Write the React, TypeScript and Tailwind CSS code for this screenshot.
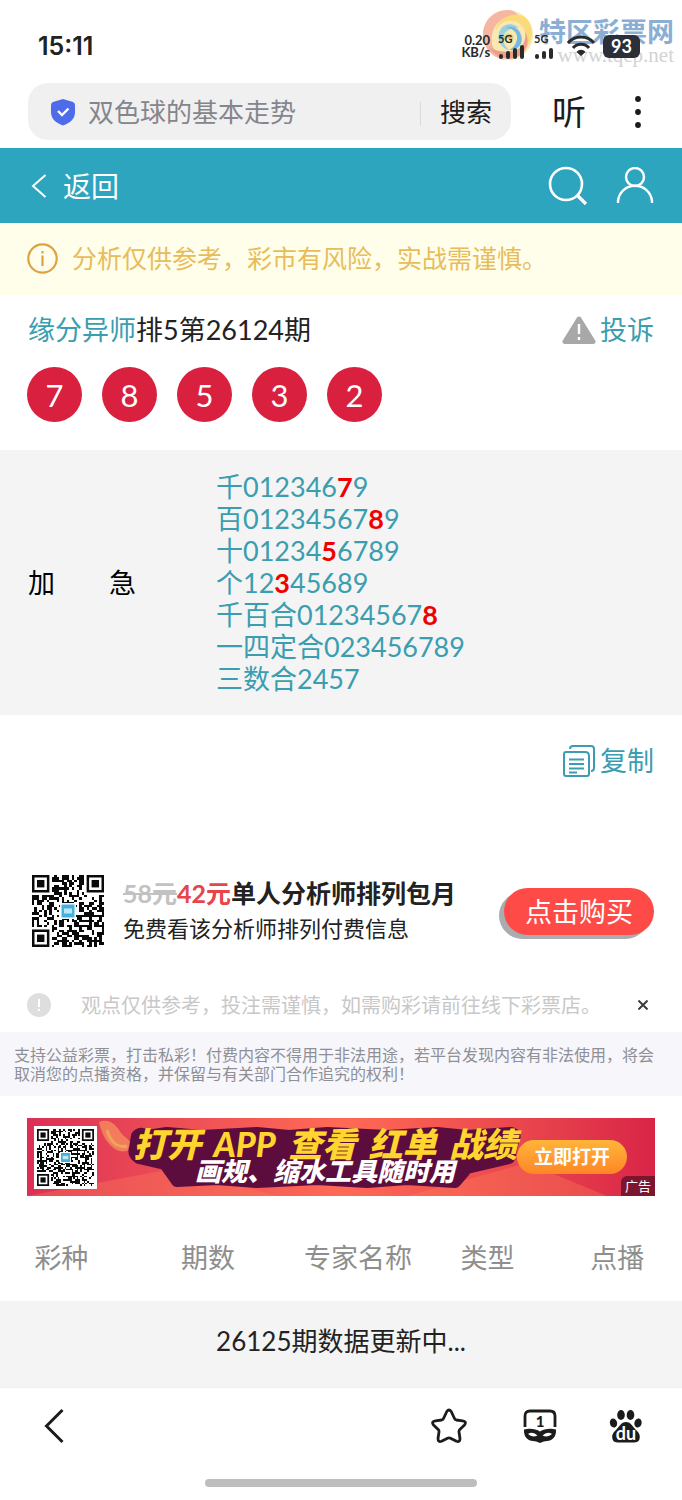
const BALLS = [7, 8, 5, 3, 2];

// [prefix, hit digit, suffix]
const PICKS = [
  ["千012346", "7", "9"],
  ["百01234567", "8", "9"],
  ["十01234", "5", "6789"],
  ["个12", "3", "45689"],
  ["千百合01234567", "8", ""],
  ["一四定合023456789", "", ""],
  ["三数合2457", "", ""],
];

function inFinder(x: number, y: number, n: number) {
  return (x < 8 && y < 8) || (x >= n - 8 && y < 8) || (x < 8 && y >= n - 8);
}

function isDark(x: number, y: number, n: number) {
  let h = Math.imul(x + 1, 374761393) ^ Math.imul(y + n, 668265263);
  h = Math.imul(h ^ (h >>> 13), 1274126177);
  h = Math.imul(h ^ (h >>> 15), 2246822519);
  return ((h ^ (h >>> 16)) >>> 0) % 100 < 52;
}

function qrPath(n: number) {
  let d = "";
  for (let y = 0; y < n; y++) {
    for (let x = 0; x < n; x++) {
      if (!inFinder(x, y, n) && isDark(x, y, n)) d += `M${x} ${y}h1v1h-1z`;
    }
  }
  return d;
}

function QrCode({ size, className }: { size: number; className: string }) {
  const corners = [
    [0, 0],
    [size - 7, 0],
    [0, size - 7],
  ];
  const mid = size / 2;
  return (
    <svg
      viewBox={`0 0 ${size} ${size}`}
      className={className}
      role="img"
      aria-label="二维码"
    >
      <path d={qrPath(size)} fill="#0a0a0a" shapeRendering="crispEdges" />
      {corners.map(([x, y]) => (
        <g key={`${x}-${y}`}>
          <path
            d={`M${x + 0.5} ${y + 0.5}h6v6h-6z`}
            fill="#fff"
            stroke="#0a0a0a"
          />
          <path d={`M${x + 2} ${y + 2}h3v3h-3z`} fill="#0a0a0a" />
        </g>
      ))}
      <rect x={mid - 3.2} y={mid - 3.2} width="6.4" height="6.4" fill="#fff" />
      <rect x={mid - 2.6} y={mid - 2.6} width="5.2" height="5.2" fill="#43b1de" />
      <rect x={mid - 1.6} y={mid - 1} width="3.2" height="2" fill="#bfe6f6" />
    </svg>
  );
}

function Signal({ bars, className }: { bars: number[]; className: string }) {
  return (
    <div className="flex flex-col items-start">
      <span className="text-[11px] leading-[12px] font-bold">5G</span>
      <svg viewBox={`0 0 ${bars.length * 7} 15`} className={className} fill="none">
        {bars.map((h, i) => (
          <path
            key={i}
            d={`M${3 + i * 7} 12V${12 - h}`}
            stroke="#2a2a2a"
            strokeWidth="4"
            strokeLinecap="round"
          />
        ))}
      </svg>
    </div>
  );
}

function Watermark() {
  return (
    <div className="absolute top-2 right-2 flex items-start opacity-80">
      <svg viewBox="0 0 54 54" className="h-[54px] w-[54px]">
        <circle cx="27" cy="27" r="25" fill="#fae3a0" />
        <path d="M27 2C12 2 2 13 2 27C2 40 12 50 24 52C14 46 9 37 11 27C13 14 24 7 38 9C36 5 32 2 27 2Z" fill="#f3a58c" />
        <path d="M44 9C32 3 16 10 14 24C18 14 28 10 36 14C46 19 48 32 42 43C52 34 55 19 44 9Z" fill="#fbd25a" />
        <path d="M8 38C12 48 26 55 38 48C47 43 49 32 44 23C46 34 40 42 31 43C21 45 12 42 8 38Z" fill="#e98872" />
        <path d="M38 20C31 13 20 16 18 25C16 33 20 40 28 42C22 36 20 30 24 25C28 20 34 19 38 20Z" fill="#79c7dc" />
        <path d="M28 42C37 43 43 35 40 27C38 20 31 17 25 20C32 20 37 25 36 31C35 37 32 40 28 42Z" fill="#4fa8dd" />
        <path d="M22 35C20 28 25 24 30 26C34 28 33 34 29 34C31 30 27 28 25 30C23 32 23 34 22 35Z" fill="#b6d97f" />
        <circle cx="29" cy="29" r="2.5" fill="#f29a4b" />
      </svg>
      <div className="mt-2 ml-1 flex flex-col items-end">
        <span className="font-['Noto_Sans_CJK_SC',sans-serif] text-[27px] leading-[30px] font-bold text-[#6f9bcb]">
          特区彩票网
        </span>
        <span className="font-['Liberation_Serif',serif] text-[21px] leading-[18px] text-[#c9c9c9]">
          www.tqcp.net
        </span>
      </div>
    </div>
  );
}

function StatusBar() {
  return (
    <div className="relative flex items-center justify-between pt-7 pr-[42px] pb-[19px] pl-[38px]">
      <Watermark />
      <span className="font-[Inter,sans-serif] text-[25px] leading-9 font-semibold text-[#222]">
        15:11
      </span>
      <div className="relative flex items-center gap-2 text-[#2a2a2a]">
        <div className="text-right text-[13px] leading-[12px] font-bold">
          <p>0.20</p>
          <p>KB/s</p>
        </div>
        <Signal bars={[1, 4, 7, 10]} className="h-[15px] w-7" />
        <Signal bars={[1, 4, 7]} className="h-[15px] w-[21px]" />
        <svg viewBox="0 0 28 22" className="ml-1 h-[22px] w-7" fill="none" stroke="#2a2a2a" strokeWidth="3">
          <path d="M1 8C8 0 20 0 27 8" />
          <path d="M6 13C10 8 18 8 22 13" />
          <path d="M9.500 17C12 14 16 14 18.500 17L14 21Z" fill="#2a2a2a" stroke="none" />
        </svg>
        <span className="rounded-md bg-[#2b2f38] px-2 text-[18px] leading-[23px] font-bold text-white">
          93
        </span>
      </div>
    </div>
  );
}

function SearchBar() {
  return (
    <div className="flex items-center pr-[41px] pb-2 pl-7">
      <form className="flex h-[57px] min-w-0 flex-1 items-center rounded-[20px] bg-[#f0f0f1] pr-[19px] pl-[22px]">
        <svg viewBox="0 0 26 28" className="h-7 w-[26px] shrink-0">
          <path
            d="M13 1L23 4Q25 5 25 7V14C25 21 20 25 13 27.500C6 25 1 21 1 14V7Q1 5 3 4Z"
            fill="#4d6bea"
          />
          <path d="M8 13L12 17L18.500 10.500" fill="none" stroke="#fff" strokeWidth="2.400" />
        </svg>
        <input
          type="text"
          aria-label="搜索词"
          placeholder="双色球的基本走势"
          className="ml-3 min-w-0 flex-1 bg-transparent text-[26px] leading-9 outline-none placeholder:text-[#85858c]"
        />
        <button
          type="button"
          className="relative pl-5 text-[26px] leading-9 text-[#1c1c1c] before:absolute before:top-2 before:left-0 before:h-6 before:w-px before:bg-[#dadada]"
        >
          搜索
        </button>
      </form>
      <button type="button" className="ml-[41px] text-[34px] leading-9 text-[#1c1c1c]">
        听
      </button>
      <button type="button" aria-label="更多" className="ml-[49px]">
        <svg viewBox="0 0 6 34" className="h-[34px] w-[6px]" fill="#1c1c1c">
          <circle cx="3" cy="4" r="2.900" />
          <circle cx="3" cy="17" r="2.900" />
          <circle cx="3" cy="30" r="2.900" />
        </svg>
      </button>
    </div>
  );
}

function Header() {
  return (
    <header className="flex h-[75px] items-center bg-[#2ea5be] pr-7 pl-[31px] text-white">
      <a href="#" className="flex items-center gap-4 text-[28px] leading-9">
        <svg viewBox="0 0 16 26" className="h-[26px] w-4" fill="none" stroke="currentColor" strokeWidth="2">
          <path d="M14.500 2L2 13L14.500 24" />
        </svg>
        返回
      </a>
      <button type="button" aria-label="搜索" className="ml-auto">
        <svg viewBox="0 0 40 40" className="h-10 w-10" fill="none" stroke="currentColor" strokeWidth="2.600">
          <circle cx="18" cy="18" r="16" />
          <path d="M29 29L38 38" strokeWidth="3.200" />
        </svg>
      </button>
      <button type="button" aria-label="我的" className="ml-7">
        <svg viewBox="0 0 38 38" className="h-[38px] w-[38px]" fill="none" stroke="currentColor" strokeWidth="2.400">
          <circle cx="19" cy="10" r="9" />
          <path d="M2 36V34C3 25 10 18.800 19 18.800S35 25 36 34V36" />
        </svg>
      </button>
    </header>
  );
}

function Banner() {
  return (
    <a
      href="#"
      className="relative mx-[27px] mt-[22px] flex h-[78px] items-center overflow-hidden bg-linear-to-r from-[#dc2f55] via-[#ff6a55] to-[#d92347] pl-[7px]"
    >
      <svg
        viewBox="0 0 628 78"
        preserveAspectRatio="xMinYMid slice"
        className="absolute inset-0 h-full w-full"
      >
        <path d="M0 78L150 50L250 78ZM380 78L500 45L580 78Z" fill="#ff7d5a" opacity="0.35" />
        <path d="M72 4C82 0 88 6 92 12C98 22 108 22 102 32C90 38 76 24 72 4Z" fill="#f58b5c" opacity="0.8" />
        <path d="M80 12C84 26 92 30 100 28" fill="none" stroke="#f0a35c" strokeWidth="3" />
        <path
          d="M110 18Q114 14 120 18L140 15L175 18L230 15L262 18L300 15L360 18L410 15L440 18L484 15Q490 16 486 24L482 40L440 50L428 64L380 61L340 64L290 61L230 64L190 61L150 63L138 46L112 40Q106 36 108 30Z"
          fill="#5c0d3d"
          stroke="#5c0d3d"
          strokeWidth="12"
          strokeLinejoin="round"
        />
      </svg>
      <div className="relative bg-white p-[3px]">
        <QrCode size={33} className="h-[57px] w-[57px]" />
      </div>
      <div className="relative ml-9 flex w-[384px] flex-col items-center font-black italic">
        <p className="flex w-full justify-between text-[34px] leading-[28px] text-[#ffd52e]">
          <span>打开</span>
          <span>APP</span>
          <span>查看</span>
          <span>红单</span>
          <span>战绩</span>
        </p>
        <p className="text-[26px] leading-[26px] text-white">画规、缩水工具随时用</p>
      </div>
      <span className="relative rounded-full bg-linear-to-b from-[#ffb53a] to-[#ff8526] px-[17px] text-[19px] leading-[34px] font-bold text-white">
        立即打开
      </span>
      <span className="absolute right-0 bottom-0 rounded-tl-md bg-[#7c1630] px-1 text-[13px] leading-5 text-white">
        广告
      </span>
    </a>
  );
}

function BottomNav() {
  return (
    <nav className="border-t border-[#f0f0f0] pt-5 pb-[13px]">
      <div className="flex items-center pr-[38px] pl-11">
        <a href="#" aria-label="返回">
          <svg viewBox="0 0 24 36" className="h-9 w-6" fill="none" stroke="#1c1c1c" strokeWidth="3">
            <path d="M18.500 2L2.500 18L18.500 34" />
          </svg>
        </a>
        <button type="button" aria-label="收藏" className="ml-auto">
          <svg viewBox="0 0 36 36" className="h-9 w-9" fill="none" stroke="#1c1c1c" strokeWidth="2.800">
            <path
              d="M15.800 3.500Q18 .5 20.200 3.500L23.500 10.500Q24 11.700 25.300 12L31.500 12.800Q36 13.500 33.500 17L28.800 21.500Q27.800 22.500 28 24L29 30.500Q29 34.500 25.500 33.300L19.500 30.200Q18 29.400 16.500 30.200L10.500 33.300Q7 34.500 7 30.500L8 24Q8.200 22.500 7.200 21.500L2.500 17Q0 13.500 4.500 12.800L10.700 12Q12 11.700 12.500 10.500Z"
              strokeLinejoin="round"
            />
          </svg>
        </button>
        <button type="button" aria-label="窗口" className="ml-[55px]">
          <svg viewBox="0 0 36 36" className="h-9 w-9" fill="none">
            <path d="M3 19V8Q3 3 8 3H28Q33 3 33 8V19" stroke="#1c1c1c" strokeWidth="2.800" />
            <path
              d="M2 21.500C8 20 14 21 18 23.500C22 21 28 20 34 21.500C34.500 29 30 33 25 33Q22 33 18 35Q14 33 11 33C6 33 1.500 29 2 21.500Z"
              fill="#1c1c1c"
            />
            <path d="M6 26Q11 23 15.500 27.500Q10 30 6 26ZM30 26Q25 23 20.500 27.500Q26 30 30 26Z" fill="#fff" />
            <text x="18" y="19" textAnchor="middle" fontSize="15" fontWeight="900" fill="#1c1c1c">
              1
            </text>
          </svg>
        </button>
        <button type="button" aria-label="百度" className="ml-[50px]">
          <svg viewBox="0 0 36 36" className="h-9 w-9" fill="#1c1c1c">
            <ellipse cx="13" cy="7" rx="3.800" ry="5" />
            <ellipse cx="22.500" cy="7" rx="3.800" ry="5" />
            <ellipse cx="5.500" cy="15" rx="3.600" ry="4.600" transform="rotate(-15 5.500 15)" />
            <ellipse cx="30" cy="15" rx="3.600" ry="4.600" transform="rotate(15 30 15)" />
            <path d="M18 14C23 14 25 19 28 22C31 25 32.500 27 31.500 31C30.500 35 27 34.500 18 34.500S5.500 35 4.500 31C3.500 27 5 25 8 22C11 19 13 14 18 14Z" />
            <text x="18" y="32" textAnchor="middle" fontSize="18" fontWeight="700" fill="#fff">
              du
            </text>
          </svg>
        </button>
      </div>
      <div className="mx-auto mt-[35px] h-2 w-2/5 rounded-full bg-[#bebebe]" />
    </nav>
  );
}

export default function App() {
  return (
    <div className="bg-white font-['Lato','Noto_Sans_CJK_SC',sans-serif] text-[#222]">
      <StatusBar />
      <SearchBar />
      <Header />

      <div className="flex items-center gap-[14px] bg-[#fffeea] pt-[17px] pb-[19px] pl-[27px] text-[25px] leading-9 text-[#e8bc5a]">
        <svg viewBox="0 0 31 31" className="h-[31px] w-[31px] shrink-0" fill="none" stroke="#dfa240" strokeWidth="2.200">
          <circle cx="15.500" cy="15.500" r="14.200" />
          <path d="M15.500 12.500V23M15.500 8V10.500" />
        </svg>
        <p>分析仅供参考，彩市有风险，实战需谨慎。</p>
      </div>

      <main>
        <section className="px-7 pt-[17px] pb-7">
          <div className="flex items-center justify-between text-[27px] leading-9">
            <h1>
              <a href="#" className="text-[#3a9db0]">
                缘分异师
              </a>
              排5第26124期
            </h1>
            <a href="#" className="flex items-center gap-1 text-[#3a9db0]">
              <svg viewBox="0 0 34 28" className="h-7 w-[34px]">
                <path d="M15 1.500Q17 -.5 19 1.500L33.500 25Q34 28 31 28H3Q0 28 .5 25Z" fill="#a8a8a8" />
                <path d="M17 8V18M17 21V24" stroke="#fff" strokeWidth="2.400" />
              </svg>
              投诉
            </a>
          </div>
          <div className="-ml-px mt-[19px] flex gap-5">
            {BALLS.map((n) => (
              <span
                key={n}
                className="flex h-[55px] w-[55px] items-center justify-center rounded-full bg-[#d9203f] text-[31px] leading-9 text-white"
              >
                {n}
              </span>
            ))}
          </div>
        </section>

        <section className="flex items-center bg-[#f4f4f4] px-7 pt-[21px] pb-5 text-[27px] leading-8">
          <p className="flex w-[108px] justify-between text-black">
            <span>加</span>
            <span>急</span>
          </p>
          <ul className="ml-20 text-[#3a9db0]">
            {PICKS.map(([before, hit, after]) => (
              <li key={before}>
                {before}
                {hit && <b className="font-bold text-[#f00000]">{hit}</b>}
                {after}
              </li>
            ))}
          </ul>
        </section>

        <div className="flex justify-end px-7 pt-7">
          <button type="button" className="flex items-center gap-1 text-[27px] leading-9 text-[#3a9db0]">
            <svg viewBox="0 0 34 34" className="h-[34px] w-[34px]" fill="none" stroke="currentColor" strokeWidth="2">
              <path d="M8 5Q8 2 11 2H29Q32 2 32 5V24Q32 27 29 27" />
              <path d="M2 10Q2 8 4 8H23Q27 8 27 12V30Q27 32 25 32H4Q2 32 2 30Z" />
              <path d="M7 15.500H22M7 20H22M7 24.500H22M7 28.500H15" strokeWidth="1.800" />
            </svg>
            复制
          </button>
        </div>

        <section className="mt-24 flex items-center px-7">
          <QrCode size={29} className="ml-1 h-[72px] w-[72px] shrink-0" />
          <div className="ml-[19px]">
            <p className="text-[25px] leading-9 font-bold">
              <del className="text-[#c2c2c2]">58元</del>
              <span className="text-[#e94448]">42元</span>
              单人分析师排列包月
            </p>
            <p className="text-[22px] leading-9">免费看该分析师排列付费信息</p>
          </div>
          <button
            type="button"
            className="ml-auto rounded-full bg-[#fe4b48] px-[21px] text-[27px] leading-[47px] text-white shadow-[-5px_4px_0_#a9adb0]"
          >
            点击购买
          </button>
        </section>

        <div className="flex items-center px-[27px] pt-[46px] pb-[15px] text-[20px] leading-6 text-[#c8c8c8]">
          <svg viewBox="0 0 24 24" className="h-6 w-6 shrink-0">
            <circle cx="12" cy="12" r="12" fill="#dedede" />
            <path d="M12 6V14M12 16V18" stroke="#fff" strokeWidth="2" />
          </svg>
          <p className="ml-[30px]">观点仅供参考，投注需谨慎，如需购彩请前往线下彩票店。</p>
          <button type="button" aria-label="关闭" className="mr-[7px] ml-auto">
            <svg viewBox="0 0 10 10" className="h-[10px] w-[10px]" fill="none" stroke="#3c3c3c" strokeWidth="2">
              <path d="M.5 .5L9.500 9.500M9.500 .5L.5 9.500" />
            </svg>
          </button>
        </div>

        <p className="bg-[#f6f6fb] px-[14px] py-[13px] text-[16px] leading-[19px] text-[#8f8f96]">
          支持公益彩票，打击私彩！付费内容不得用于非法用途，若平台发现内容有非法使用，将会取消您的点播资格，并保留与有关部门合作追究的权利！
        </p>

        <Banner />

        <table className="w-full table-fixed text-center">
          <thead className="text-[27px] leading-9 text-[#8e8e8e]">
            <tr>
              <th className="w-[18%] pt-11 pb-[25px] font-normal">彩种</th>
              <th className="w-[25%] pt-11 pb-[25px] font-normal">期数</th>
              <th className="w-[19%] pt-11 pb-[25px] font-normal">专家名称</th>
              <th className="w-[19%] pt-11 pb-[25px] font-normal">类型</th>
              <th className="w-[19%] pt-11 pb-[25px] font-normal">点播</th>
            </tr>
          </thead>
          <tbody>
            <tr className="bg-[#f4f4f4] text-[26px] leading-9">
              <td colSpan={5} className="pt-[22px] pb-7">
                26125期数据更新中...
              </td>
            </tr>
          </tbody>
        </table>
      </main>

      <BottomNav />
    </div>
  );
}
